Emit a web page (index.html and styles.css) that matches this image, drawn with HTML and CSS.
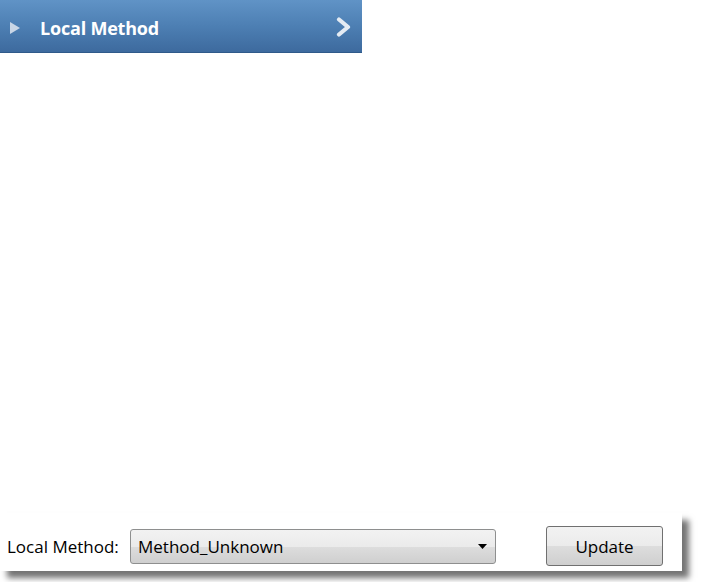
FILE: index.html
```html
<!DOCTYPE html>
<html>
<head>
<meta charset="utf-8">
<link rel="stylesheet" href="styles.css">
</head>
<body>
<div class="page">
  <div class="header">
    <svg class="tri" width="10" height="12" viewBox="0 0 10 12"><path d="M0 0 L10 6 L0 12 Z" fill="#c9d6e6"/></svg>
    <span class="title">Local Method</span>
    <svg class="chev" width="16" height="20" viewBox="0 0 16 20"><path d="M3 2.5 L12 10 L3 17.5" fill="none" stroke="#e4ebf3" stroke-width="4.2" stroke-linecap="round" stroke-linejoin="round"/></svg>
  </div>
  <div class="spacer"></div>
  <div class="panel">
    <span class="label">Local Method:</span>
    <div class="select">
      <span>Method_Unknown</span>
      <svg width="9" height="5" viewBox="0 0 9 5"><path d="M0 0 H9 L4.5 5 Z" fill="#000"/></svg>
    </div>
    <div class="button">Update</div>
  </div>
</div>
</body>
</html>
```
FILE: styles.css
```css
html, body { margin: 0; padding: 0; background: #fff; }
body { width: 704px; height: 582px; overflow: hidden; font-family: "Open Sans", "Noto Sans", sans-serif; }
.page { display: flex; flex-direction: column; height: 582px; }
.header {
  width: 362px; height: 53px; box-sizing: border-box;
  background: linear-gradient(#6093c6 0%, #4d7fb3 50%, #3d6a9e 100%);
  border-bottom: 1px solid #2f5a8a;
  display: flex; align-items: center;
  padding: 3px 10px 0 10px;
}
.tri { margin-top: 1px; }
.title {
  margin-left: 20px; color: #fff; font-weight: bold; font-size: 18px;
  font-family: "Open Sans", sans-serif; letter-spacing: -0.2px; flex: 1;
}
.chev { margin-right: 0px; margin-top: -1px; }
.spacer { flex: 1; }
.panel {
  width: 682px; height: 58px; margin-bottom: 11px; box-sizing: border-box;
  background: #fff;
  box-shadow: 7px 7px 6px rgba(0,0,0,0.55);
  display: flex; align-items: center; padding: 8px 0 0 7px;
  font-size: 17px; color: #000;
}
.label { width: 123px; }
.select {
  width: 366px; height: 35px; box-sizing: border-box;
  border: 1px solid #8e8f8f; border-radius: 3px;
  background: linear-gradient(#f2f2f2 0%, #ebebeb 50%, #dddddd 51%, #cfcfcf 100%);
  display: flex; align-items: center; justify-content: space-between;
  padding: 0 8px 0 7px;
}
.button {
  margin-left: 50px; width: 117px; height: 40px; box-sizing: border-box;
  border: 1px solid #707070; border-radius: 3px;
  background: linear-gradient(#f2f2f2 0%, #ebebeb 50%, #dddddd 51%, #cfcfcf 100%);
  display: flex; align-items: center; justify-content: center;
}
```
